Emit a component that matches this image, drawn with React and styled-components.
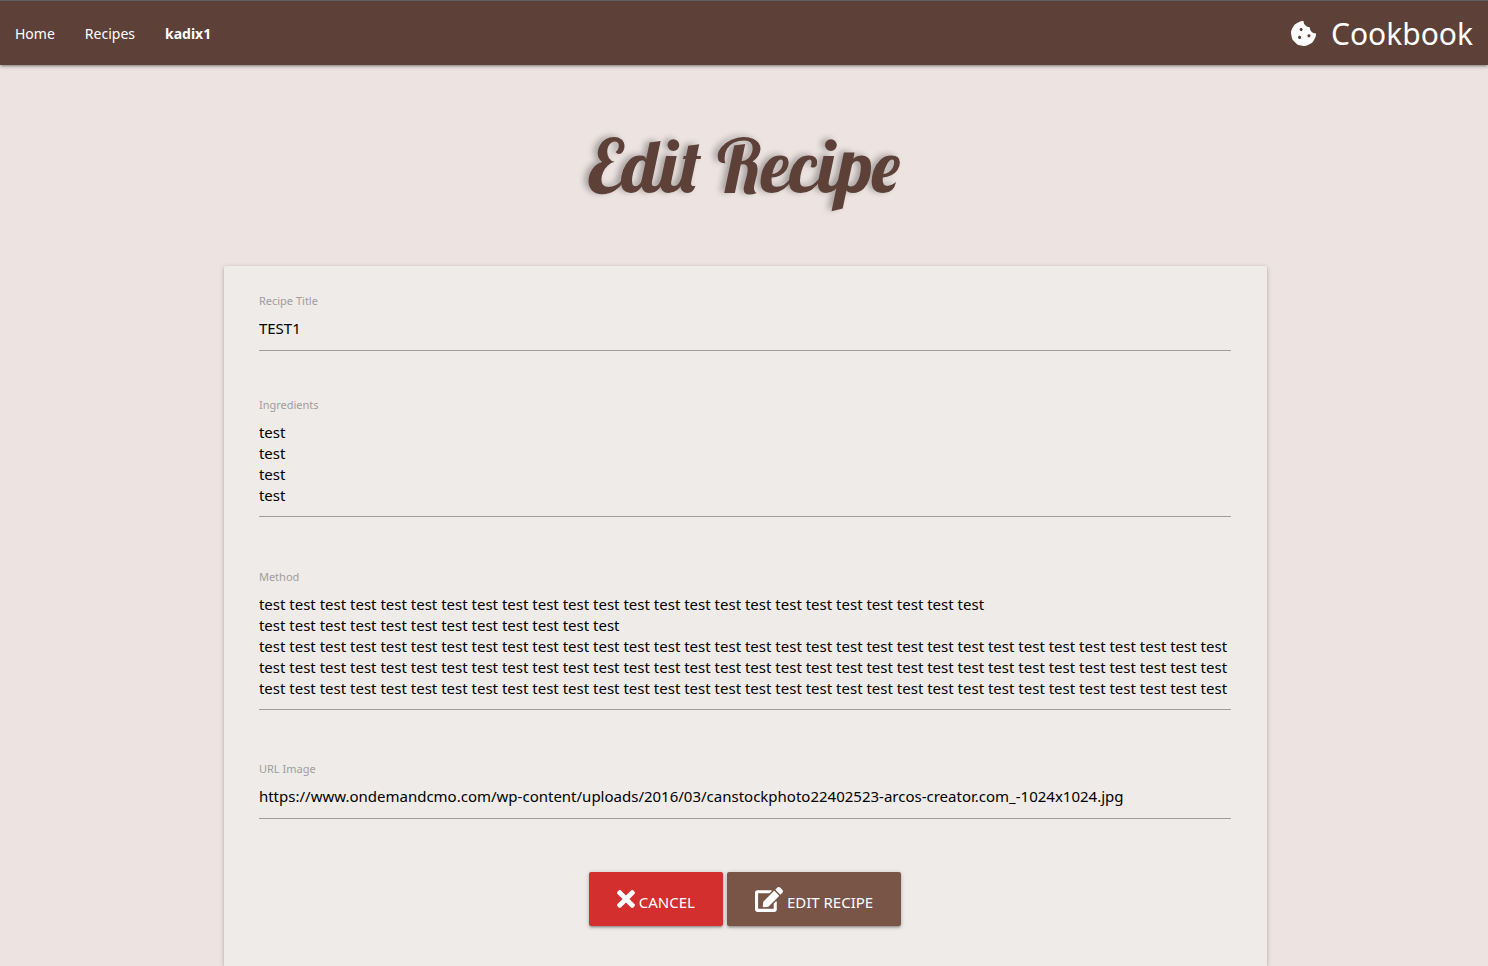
import React from "react";
import styled, { createGlobalStyle } from "styled-components";
import { FaCookieBite, FaEdit, FaTimes } from "react-icons/fa";

const GlobalStyle = createGlobalStyle`
  *, *::before, *::after { box-sizing: border-box; }
  body {
    margin: 0;
    background: #ede4e2;
    color: #000;
    font-family: "Segoe UI", "Noto Sans", "Open Sans", sans-serif;
    font-size: 15px;
    line-height: 21px;
  }
`;

const elevation = `
  box-shadow: 0 2px 2px 0 rgba(0, 0, 0, 0.14),
    0 3px 1px -2px rgba(0, 0, 0, 0.12),
    0 1px 5px 0 rgba(0, 0, 0, 0.2);
`;

const Page = styled.div`
  display: flex;
  flex-direction: column;
  min-height: 100vh;
`;

const NavBar = styled.nav`
  display: flex;
  justify-content: space-between;
  align-items: center;
  height: 65px;
  border-top: 1px solid #5f5f5f;
  background: #5d4037;
  ${elevation}
`;

const NavList = styled.ul`
  display: flex;
  margin: 0;
  padding: 0;
  list-style: none;
`;

const NavLink = styled.a`
  display: block;
  padding: 2px 15px 0;
  color: #fff;
  font-size: 14px;
  font-weight: ${({ $strong }) => ($strong ? 700 : 400)};
  line-height: 62px;
  text-decoration: none;
`;

const Brand = styled.a`
  display: flex;
  align-items: center;
  gap: 15px;
  padding: 0 15px;
  color: #fff;
  font-size: 30px;
  line-height: 62px;
  text-decoration: none;

  span {
    padding-top: 2px;
  }
`;

const CookieIcon = styled(FaCookieBite)`
  width: 25px;
  height: 25px;
`;

const Main = styled.main`
  display: flex;
  flex: 1;
  flex-direction: column;
`;

const Title = styled.h1`
  margin: 57px 0 56px;
  color: #5d4037;
  font-family: Lobster, "Liberation Serif", serif;
  font-size: 74px;
  font-weight: 400;
  line-height: 88px;
  text-align: center;
  text-shadow: -4px -1px 6px rgba(0, 0, 0, 0.3);
`;

const Card = styled.form`
  display: flex;
  flex: 1;
  flex-direction: column;
  width: 70.1%;
  margin-left: 15.05%;
  padding: 26px 36px 40px 35px;
  border-radius: 2px 2px 0 0;
  background: #efebe8;
  ${elevation}
`;

const Field = styled.div`
  display: flex;
  flex-direction: column;
  margin-bottom: ${({ $gap }) => $gap}px;
`;

const Label = styled.label`
  color: #9e9e9e;
  font-size: 11px;
  line-height: 18px;
`;

const control = `
  display: block;
  width: 100%;
  margin: 0;
  border: 0;
  border-bottom: 1px solid #9e9e9e;
  border-radius: 0;
  outline: none;
  background: transparent;
  color: #000;
  font-family: inherit;
  font-size: 15px;
  line-height: 21px;
`;

const TextInput = styled.input`
  ${control}
  height: 41px;
  padding: 7px 0 12px;
`;

const TextArea = styled.textarea`
  ${control}
  padding: 8px 0 10px;
  overflow: hidden;
  resize: none;
`;

const Actions = styled.div`
  display: flex;
  justify-content: center;
  gap: 4px;
  margin-top: 3px;
`;

const Button = styled.button`
  display: flex;
  align-items: center;
  gap: 4px;
  height: 54px;
  padding: 0 28px;
  border: 0;
  border-radius: 2px;
  background: ${({ $color }) => $color};
  color: #fff;
  cursor: pointer;
  font-family: inherit;
  font-size: 15px;
  line-height: 21px;
  text-transform: uppercase;
  ${elevation}

  span {
    padding-top: 6px;
  }
`;

const CancelIcon = styled(FaTimes)`
  width: 18px;
  height: 26px;
`;

const EditIcon = styled(FaEdit)`
  width: 28px;
  height: 25px;
`;

const repeat = (count) => Array(count).fill("test").join(" ");

const recipe = {
  title: "TEST1",
  ingredients: Array(4).fill("test").join("\n"),
  method: [repeat(24), repeat(12), repeat(96)].join("\n"),
  image:
    "https://www.ondemandcmo.com/wp-content/uploads/2016/03/canstockphoto22402523-arcos-creator.com_-1024x1024.jpg",
};

export default function App() {
  return (
    <Page>
      <GlobalStyle />
      <NavBar>
        <NavList>
          <li><NavLink href="#home">Home</NavLink></li>
          <li><NavLink href="#recipes">Recipes</NavLink></li>
          <li><NavLink href="#profile" $strong>kadix1</NavLink></li>
        </NavList>
        <Brand href="#home">
          <CookieIcon aria-hidden="true" />
          <span>Cookbook</span>
        </Brand>
      </NavBar>
      <Main>
        <Title>Edit Recipe</Title>
        <Card onSubmit={(event) => event.preventDefault()}>
          <Field $gap={45}>
            <Label htmlFor="title">Recipe Title</Label>
            <TextInput id="title" type="text" defaultValue={recipe.title} />
          </Field>
          <Field $gap={51}>
            <Label htmlFor="ingredients">Ingredients</Label>
            <TextArea id="ingredients" rows={4} spellCheck={false} defaultValue={recipe.ingredients} />
          </Field>
          <Field $gap={50}>
            <Label htmlFor="method">Method</Label>
            <TextArea id="method" rows={5} spellCheck={false} defaultValue={recipe.method} />
          </Field>
          <Field $gap={50}>
            <Label htmlFor="image">URL Image</Label>
            <TextInput id="image" type="text" spellCheck={false} defaultValue={recipe.image} />
          </Field>
          <Actions>
            <Button type="button" $color="#d32f2f">
              <CancelIcon aria-hidden="true" />
              <span>Cancel</span>
            </Button>
            <Button type="submit" $color="#795548">
              <EditIcon aria-hidden="true" />
              <span>Edit Recipe</span>
            </Button>
          </Actions>
        </Card>
      </Main>
    </Page>
  );
}
